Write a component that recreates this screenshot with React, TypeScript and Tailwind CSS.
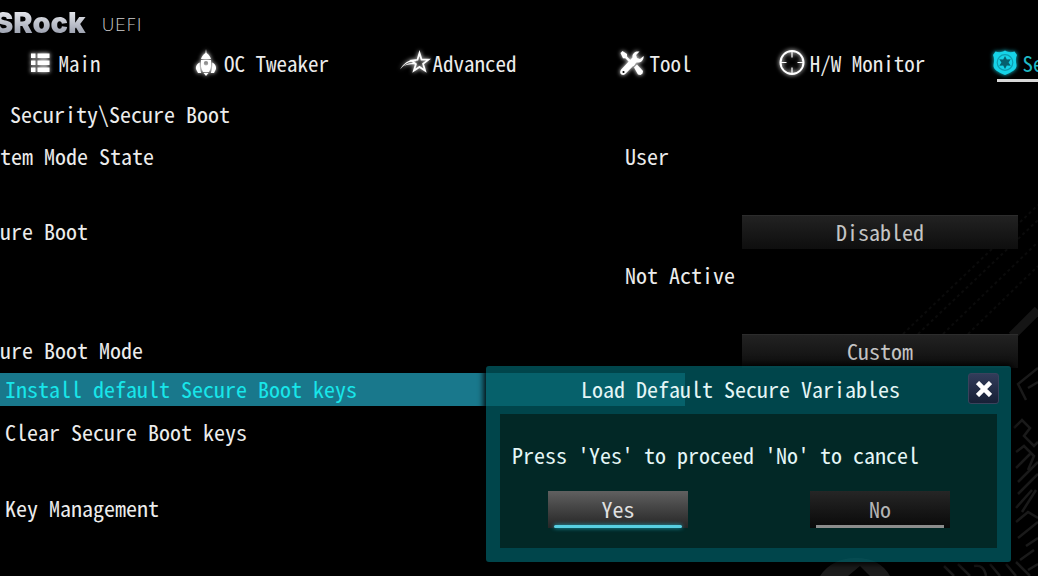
import React from "react";

const body = "text-[22px] leading-[30px]";

function Glow({ children, tint = "text-white" }: { children: React.ReactNode; tint?: string }) {
  return (
    <svg
      viewBox="0 0 28 28"
      aria-hidden="true"
      className={`size-7 ${tint} shrink-0 overflow-visible drop-shadow-[0_0_2px_currentColor]`}
      fill="currentColor"
    >
      {children}
    </svg>
  );
}

const ListIcon = () => (
  <Glow>
    <path d="M4 4.500h4.500V9H4zM10.500 4.500h12V9h-12zM4 11.500h4.500V16H4zM10.500 11.500h12V16h-12zM4 18.500h4.500V23H4zM10.500 18.500h12V23h-12z" />
  </Glow>
);

const RocketIcon = () => (
  <Glow>
    <path d="M14 0l.6 4C16.800 5.500 18.300 7.500 19 10H9c.7-2.500 2.200-4.500 4.400-6z" />
    <path
      fillRule="evenodd"
      d="M9 11h10c.6 4.500 0 8.500-2 12h-6c-2-3.500-2.600-7.500-2-12zm5 1a2.200 2.200 0 100 4.400 2.200 2.200 0 000-4.400z"
    />
    <path d="M7.800 13.500c-2.500 1-4.300 3.500-3.800 6.500l2 4h3.300c-1.200-3-1.700-6.500-1.500-10.500zM20.200 13.500c2.500 1 4.300 3.500 3.800 6.500l-2 4h-3.300c1.200-3 1.700-6.500 1.500-10.500zM11.500 24h5L14 27z" />
  </Glow>
);

const StarIcon = () => (
  <svg
    viewBox="0 0 32 28"
    aria-hidden="true"
    className="-mr-0.5 h-7 w-8 shrink-0 overflow-visible text-white drop-shadow-[0_0_2px_currentColor]"
  >
    <path
      d="M20.500 4l2 6.500 7 .2-5.400 4.200 2 6.800-5.600-3.800-5.600 3.800 2-6.600-4.400-3.500 6-.8z"
      fill="none"
      stroke="currentColor"
      strokeWidth="1.800"
    />
    <path d="M1 20.500c4-7 9-10 16-9.500l-.5 1.500C10 12 6 14.500 1 20.500zM4 17.500c4-3.200 7.500-4 12-3.300v1.300c-4.500-.6-8-.2-12 2z" fill="currentColor" />
  </svg>
);

const ToolIcon = () => (
  <Glow>
    <path d="M2.500 4l2-2L9 5v2.500l8 8-1.700 1.700-8-8H5z" />
    <path d="M25.600 7l-3.600 3-3-.9-.9-3L21.500 2.600c-4.200-.8-7.600 1.800-7 6L3.200 20.500c-1.500 1.700-1.200 4 .3 5 1.600.9 3 .5 4.200-.9L18.500 13.500c4.500.6 7.500-2.500 7.100-6.500z" />
    <path d="M16 18.500l3-3 6 6.500-.5 2.500-2 1.500-2.500-.5z" />
    <circle cx="5.500" cy="23" r="1.100" fill="#000" />
  </Glow>
);

const TargetIcon = () => (
  <Glow>
    <circle cx="14" cy="13.500" r="11.500" fill="none" stroke="currentColor" strokeWidth="2" />
    <path d="M14 2.500V8.500M14 18.500v6M2.500 13.500h6M19.500 13.500h6" fill="none" stroke="currentColor" strokeWidth="1.200" />
  </Glow>
);

const BadgeIcon = () => (
  <Glow tint="text-[#16d3e8]">
    <path d="M4.500 2.500c3 1 6.500 1 9.500-1 3 2 6.500 2 9.500 1L26 6c-1.500 3-1.300 6-.5 10 .5 5-5 7-11.500 10C7.500 23 2 21 2.500 16c.8-4 1-7-.5-10z" />
    <circle cx="14" cy="13.500" r="7.800" fill="none" stroke="#0d9db0" strokeWidth="1.200" />
    <path d="M14 7l1.800 3.400 3.900-.1-2.100 3.200 2.100 3.200-3.900-.1L14 20l-1.800-3.400-3.900.1 2.100-3.200-2.100-3.200 3.900.1z" fill="#06606e" />
  </Glow>
);

const tabs = [
  { name: "Main", icon: <ListIcon /> },
  { name: "OC Tweaker", icon: <RocketIcon /> },
  { name: "Advanced", icon: <StarIcon /> },
  { name: "Tool", icon: <ToolIcon /> },
  { name: "H/W Monitor", icon: <TargetIcon /> },
  { name: "Security", icon: <BadgeIcon />, active: true },
];

function Backdrop() {
  return (
    <svg
      aria-hidden="true"
      viewBox="0 0 300 376"
      className="pointer-events-none absolute right-0 bottom-0 h-[376px] w-[300px]"
      fill="none"
    >
      <g stroke="#0b0b0b" strokeWidth="2" strokeDasharray="3 3">
        <path d="M165 134L300 5M180 134L300 20M205 134L300 42M230 134L300 66" />
      </g>
      <path d="M274 136l26-26" stroke="#151515" strokeWidth="9" />
      <g stroke="#1a1a1a" strokeWidth="2.500">
        <path d="M300 168l-20 16 8 16M300 182l-10 6M276 228l8-8 8 8-6 8 10 10 4-4M278 252l8-6 10 10-6 14M278 268l14-14M280 282l20-20M280 294l20-20M278 308l16-18M284 312l14-22M278 322l12-10 10 6M280 338l20-16M288 346l12-8M282 360l14-10M290 370l10-6" />
        <path d="M206 366l10 10M220 364l12 12M236 366q10-2 12 10M252 364l10 12M268 364l10 12M278 362l14 14" />
      </g>
      <path d="M82 376q12-18 36-18t34 18h-20l-10-10-12 10z" fill="#1c1c1c" />
    </svg>
  );
}

function Setting({ id, label, value }: { id: string; label: string; value: string }) {
  return (
    <div className="grid grid-cols-[742fr_276fr] pr-5">
      <label htmlFor={id}>{label}</label>
      <select
        id={id}
        defaultValue={value}
        className="h-[34px] appearance-none border-t border-[#2c2c2c] bg-linear-to-b from-[#222] to-[#0e0e0e] pb-1 text-[#c4c4c4] [text-align-last:center]"
      >
        <option>{value}</option>
      </select>
    </div>
  );
}

function Status({ label, value }: { label?: string; value: string }) {
  return (
    <div className="grid grid-cols-[625fr_393fr] pr-5 pb-1">
      <span>{label}</span>
      <span>{value}</span>
    </div>
  );
}

export default function App() {
  return (
    <div className="relative min-h-screen overflow-hidden bg-black font-['Noto_Sans_Mono_CJK_JP','Liberation_Mono',monospace] text-[#ececec]">
      <Backdrop />
      <div className="relative">
        <header className="flex h-11 items-center gap-4 pt-0.5">
          <span className="-ml-1.5 bg-linear-to-b from-[#f4f5f8] to-[#8d93a3] bg-clip-text font-['Inter'] text-[29px] leading-8 font-black text-transparent">
            SRock
          </span>
          <span className="pt-1 font-['DejaVu_Sans'] text-[18px] leading-6 font-extralight text-[#cfcfcf]">UEFI</span>
        </header>

        <nav className="-ml-[35px] grid auto-cols-[197px] grid-flow-col text-[21px] leading-7">
          {tabs.map((t) => (
            <div key={t.name} className="flex justify-center">
              <a
                href="#"
                aria-current={t.active ? "page" : undefined}
                className={
                  t.active
                    ? "relative flex h-[38px] items-center gap-1 text-[#20b8c4] after:absolute after:right-1 after:bottom-0 after:left-1.5 after:h-[3px] after:bg-[#d8d8d8]"
                    : "flex h-[38px] items-center gap-1"
                }
              >
                {t.icon}
                <span>{t.name}</span>
              </a>
            </div>
          ))}
        </nav>

        <main className={body}>
          <h1 className="mt-4 pb-1 pl-2.5">Security\Secure Boot</h1>
          <div className="mt-2">
            <Status label="tem Mode State" value="User" />
          </div>
          <div className="mt-[41px]">
            <Setting id="secure-boot" label="ure Boot" value="Disabled" />
          </div>
          <div className="mt-2.5">
            <Status value="Not Active" />
          </div>
          <div className="mt-[41px]">
            <Setting id="secure-boot-mode" label="ure Boot Mode" value="Custom" />
          </div>
          <button className="mt-[5px] block w-[66%] bg-[#19788c] pb-[3px] pl-[5px] text-left text-[#18e6ea]">
            Install default Secure Boot keys
          </button>
          <button className="mt-[10px] block pl-[5px] text-left">Clear Secure Boot keys</button>
          <button className="mt-[46px] block pl-[5px] text-left">Key Management</button>
        </main>
      </div>

      <section
        role="dialog"
        aria-labelledby="dialog-title"
        className={`${body} absolute top-[366px] right-[27px] w-[525px] rounded-[3px] bg-[#005a61]/77 px-3.5 pb-3.5 text-[#e4f6f6] shadow-[0_0_6px_2px_#000]`}
      >
        <div className="relative flex h-12 items-center justify-center">
          <h2 id="dialog-title" className="pr-4 pb-1">
            Load Default Secure Variables
          </h2>
          <button
            aria-label="Close"
            className="absolute top-[7px] -right-0.5 flex size-[31px] items-center justify-center rounded-[3px] border border-[#39425c] bg-linear-to-b from-[#323c5a] to-[#172036]"
          >
            <svg viewBox="0 0 16 16" className="size-4" stroke="#fff" strokeWidth="4.500" aria-hidden="true">
              <path d="M1.500 1.500l13 13M14.500 1.500l-13 13" />
            </svg>
          </button>
        </div>
        <div className="bg-[#022826] px-3 pt-[25px] pb-5">
          <p>Press 'Yes' to proceed 'No' to cancel</p>
          <div className="mt-[22px] flex justify-between pr-[35px] pl-9">
            <button className="relative h-[37px] w-[140px] bg-linear-to-b from-[#606060] to-[#262626] pb-1 text-[#e0e0e0] after:absolute after:inset-x-1.5 after:bottom-0 after:h-[3px] after:rounded-full after:bg-[#57cfe2] after:shadow-[0_0_4px_#20a8c0]">
              Yes
            </button>
            <button className="relative h-[37px] w-[140px] bg-linear-to-b from-[#262626] to-[#0a0a0a] pb-1 text-[#b4b4b4] after:absolute after:inset-x-1.5 after:bottom-0 after:h-[3px] after:bg-[#8c8c8c]">
              No
            </button>
          </div>
        </div>
      </section>
    </div>
  );
}
